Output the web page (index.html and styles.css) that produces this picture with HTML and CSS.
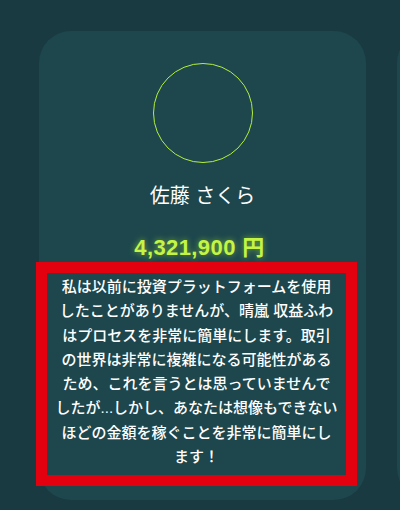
FILE: index.html
```html
<!DOCTYPE html>
<html lang="ja">
<head>
    <meta charset="UTF-8">
    <meta name="viewport" content="width=device-width, initial-scale=1.0">
    <title>お客様の声</title>
    <link rel="stylesheet" href="styles.css">
</head>
<body>
    <div class="slider">
        <div class="review-card">
            <div class="avatar"></div>
            <p class="name">佐藤 さくら</p>
            <p class="balance">4,321,900 円</p>
            <p class="review">私は以前に投資プラットフォームを使用したことがありませんが、晴嵐 収益ふわはプロセスを非常に簡単にします。取引の世界は非常に複雑になる可能性があるため、これを言うとは思っていませんでしたが...しかし、あなたは想像もできないほどの金額を稼ぐことを非常に簡単にします！</p>
        </div>
        <div class="review-card"></div>
    </div>
</body>
</html>
```

FILE: styles.css
```css
/* ======= CSS ======= */
body {
    font-family: "Liberation Sans", "Noto Sans CJK JP", sans-serif;
    margin: 0;
    padding: 0;
    background: #183a40;
    color: #fff;
}

.slider {
    display: flex;
    gap: 31px;
    padding: 31px 0 0 39px;
    height: 510px;
    box-sizing: border-box;
    overflow: hidden;
}

.review-card {
    flex: 0 0 327px;
    height: 469px;
    box-sizing: border-box;
    padding-top: 32px;
    background: #1d474d;
    border-radius: 32px;
    display: flex;
    flex-direction: column;
    align-items: center;
}

.avatar {
    width: 100px;
    height: 100px;
    box-sizing: border-box;
    border: 1px solid #b4f03c;
    border-radius: 50%;
}

.name {
    margin: 20px 0 0;
    font-size: 20px;
    line-height: 26px;
}

.balance {
    margin: 25px 6px 0 0;
    font-size: 22px;
    font-weight: bold;
    letter-spacing: 0.4px;
    line-height: 28px;
    color: #c4f542;
    text-shadow: 0 0 6px rgba(180, 240, 60, 0.6);
}

/* highlighted quote */
.review {
    align-self: flex-start;
    width: 283px;
    margin: 0 0 0 -3px;
    padding: 2px 8px 6px;
    border: 11px solid #e3000f;
    font-size: 15px;
    font-weight: 500;
    line-height: 24.3px;
    text-align: center;
}
```
